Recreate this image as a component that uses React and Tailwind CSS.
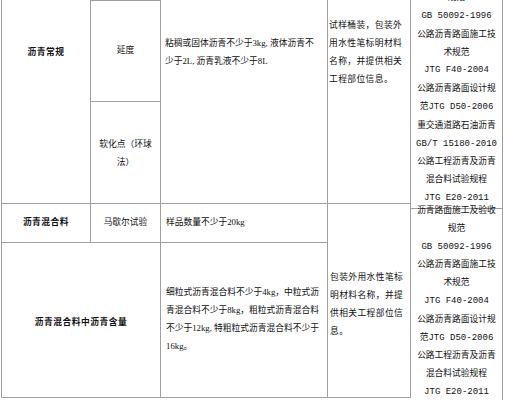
import React from 'react';

const line = "border-[#a0a0a0]";

function Mono({ children }) {
  return <span className="font-['Liberation_Mono',monospace] text-[9px]">{children}</span>;
}

function StdList({ lines, offset }) {
  return (
    <div className={`border-r border-b ${line} text-center leading-[17.8px]`}>
      <div className={offset}>
        {lines.map((l, i) => (
          <div key={i}>{l}</div>
        ))}
      </div>
    </div>
  );
}

const topStandards = [
  '沥青路面施工及验收',
  '规范',
  <Mono>GB 50092-1996</Mono>,
  '公路沥青路面施工技',
  '术规范',
  <Mono>JTG F40-2004</Mono>,
  '公路沥青路面设计规',
  <>范<Mono>JTG D50-2006</Mono></>,
  '重交通道路石油沥青',
  <Mono>GB/T 15180-2010</Mono>,
  '公路工程沥青及沥青',
  '混合料试验规程',
  <Mono>JTG E20-2011</Mono>,
];

const mixStandards = [
  '沥青路面施工及验收',
  '规范',
  <Mono>GB 50092-1996</Mono>,
  '公路沥青路面施工技',
  '术规范',
  <Mono>JTG F40-2004</Mono>,
  '公路沥青路面设计规',
  <>范<Mono>JTG D50-2006</Mono></>,
  '公路工程沥青及沥青',
  '混合料试验规程',
  <Mono>JTG E20-2011</Mono>,
];

export default function App() {
  return (
    <div className="min-h-[400px] w-[505px] overflow-hidden bg-white font-['Liberation_Serif','Noto_Sans_CJK_SC',serif] text-[8.75px] text-[#111]">
      <div className={`ml-px grid w-[502px] grid-cols-[89px_70px_167px_83px_92px] grid-rows-[102px_102px_39px_155px] border-l ${line}`}>
        {/* 沥青常规 */}
        <div className={`row-span-2 border-r border-b ${line} pt-[43px] text-center font-bold leading-[18px] tracking-[0.5px]`}>
          沥青常规
        </div>
        <div className={`flex items-center justify-center border-t border-r border-b ${line}`}>延度</div>
        <div className={`row-span-2 border-r border-b ${line} pl-[4px] pt-[34px] leading-[18px]`}>
          粘稠或固体沥青不少于3kg, 液体沥青不
          <br />
          少于2L, 沥青乳液不少于8L
        </div>
        <div className={`row-span-2 border-r border-b ${line} pl-px pt-[16px] leading-[18px] tracking-[0.4px]`}>
          试样桶装，包装外
          <br />
          用水性笔标明材料
          <br />
          名称，并提供相关
          <br />
          工程部位信息。
        </div>
        <div className="row-span-2">
          <StdList lines={topStandards} offset="-mt-[28.5px]" />
        </div>
        <div className={`col-start-2 row-start-2 flex items-center justify-center border-r border-b ${line} px-[5px] text-center leading-[18px]`}>
          软化点（环球
          <br />
          法）
        </div>

        {/* 沥青混合料 */}
        <div className={`flex items-center justify-center border-r border-b ${line} font-bold tracking-[0.5px]`}>
          沥青混合料
        </div>
        <div className={`flex items-center justify-center border-r border-b ${line}`}>马歇尔试验</div>
        <div className={`flex items-center border-r border-b ${line} pl-[5px]`}>样品数量不少于20kg</div>
        <div className={`row-span-2 flex items-center border-r border-b ${line} pl-[2px] pt-[6px] leading-[18px] tracking-[0.4px]`}>
          <div>
            包装外用水性笔标
            <br />
            明材料名称，并提
            <br />
            供相关工程部位信
            <br />
            息。
          </div>
        </div>
        <div className="row-span-2 grid">
          <StdList lines={mixStandards} offset="-mt-[2px]" />
        </div>

        <div className={`col-span-2 flex items-center justify-center border-r border-b ${line} pt-[6px] font-bold tracking-[0.5px]`}>
          沥青混合料中沥青含量
        </div>
        <div className={`flex items-center border-r border-b ${line} pl-[5px] leading-[17.8px]`}>
          <div>
            细粒式沥青混合料不少于4kg，中粒式沥
            <br />
            青混合料不少于8kg，粗粒式沥青混合料
            <br />
            不少于12kg, 特粗粒式沥青混合料不少于
            <br />
            16kg。
          </div>
        </div>
      </div>
    </div>
  );
}
